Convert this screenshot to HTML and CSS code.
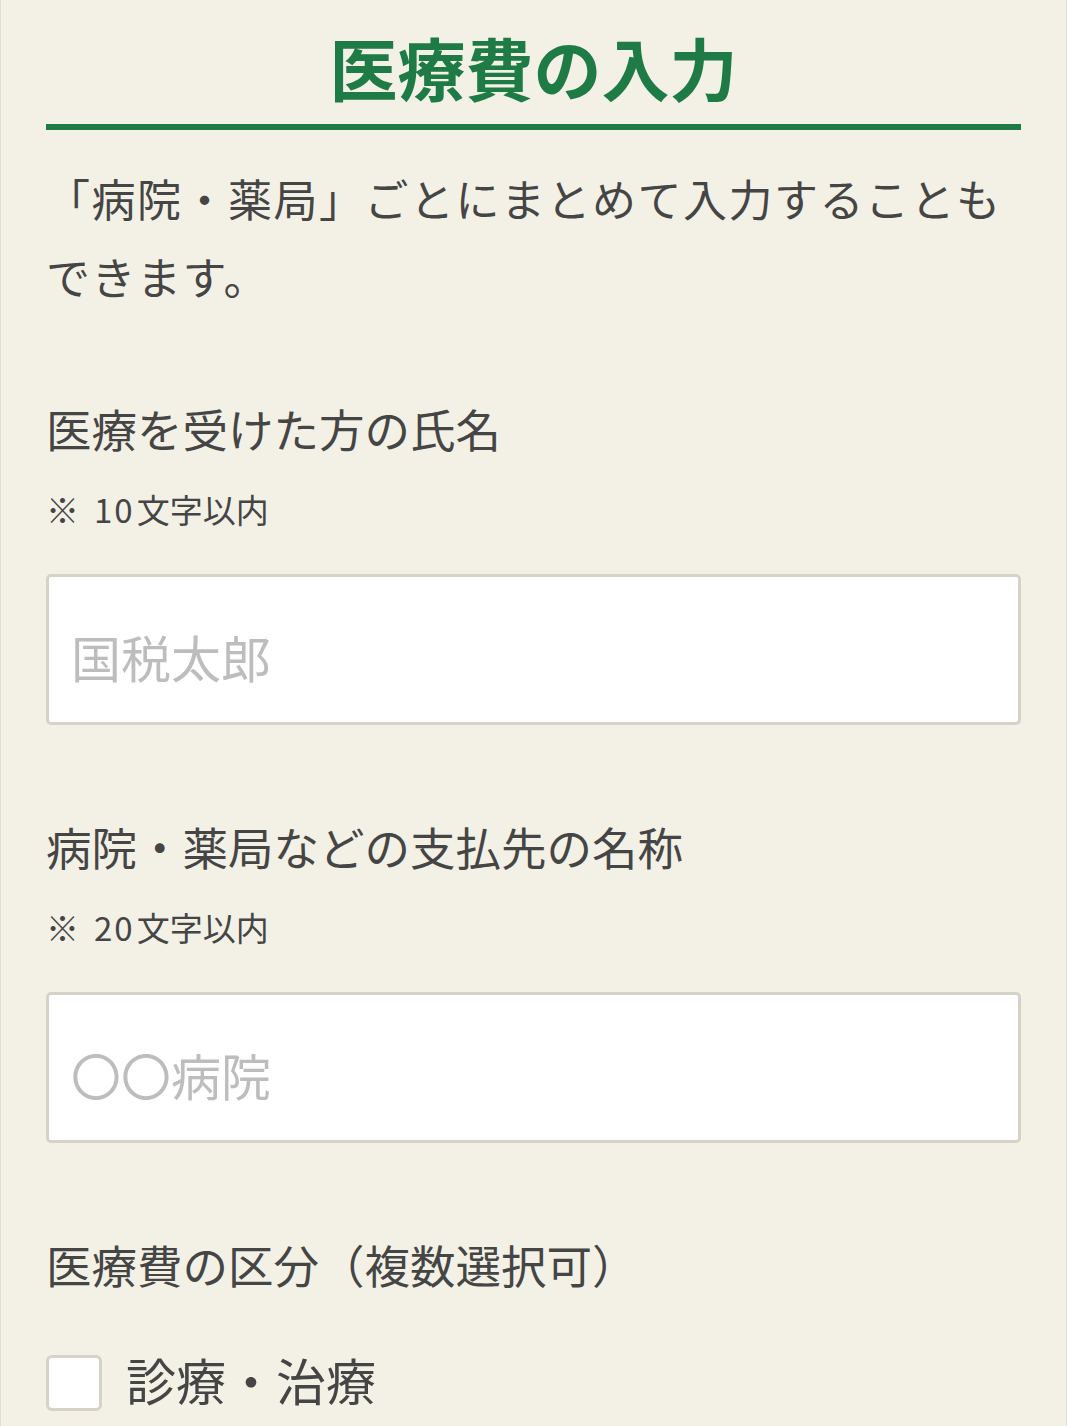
FILE: index.html
```html
<!DOCTYPE html>
<html lang="ja">
<head>
<meta charset="utf-8">
<title>医療費の入力</title>
<link rel="stylesheet" href="styles.css">
</head>
<body>
<main class="page">
  <h1 class="title">医療費の入力</h1>
  <p class="lead">「病院・薬局」ごとにまとめて入力することもできます。</p>

  <div class="field">
    <label class="label" for="name">医療を受けた方の氏名</label>
    <p class="note"><span class="mark">※</span><span class="num">10</span>文字以内</p>
    <input class="text-input" id="name" type="text" placeholder="国税太郎">
  </div>

  <div class="field">
    <label class="label" for="payee">病院・薬局などの支払先の名称</label>
    <p class="note"><span class="mark">※</span><span class="num">20</span>文字以内</p>
    <input class="text-input" id="payee" type="text" placeholder="〇〇病院">
  </div>

  <div class="field field-check">
    <p class="label">医療費の区分（複数選択可）</p>
    <label class="check-row">
      <input class="checkbox" type="checkbox">
      <span class="check-text">診療・治療</span>
    </label>
  </div>
</main>
</body>
</html>
```

FILE: styles.css
```css
html, body {
  margin: 0;
  padding: 0;
}

body {
  background: #f3f1e6;
  color: #454545;
  font-family: "Noto Sans CJK JP", "Noto Sans", sans-serif;
  min-height: 1426px;
  box-shadow: inset 1px 0 0 #e2dfd4, inset -1px 0 0 #e2dfd4;
  text-spacing-trim: space-all;
}

.page {
  padding: 0 46px;
  display: flex;
  flex-direction: column;
}

.title {
  margin: 0;
  padding-top: 27px;
  padding-bottom: 18px;
  font-size: 68px;
  line-height: 79px;
  font-weight: 700;
  color: #1e7b45;
  text-align: center;
  border-bottom: 6px solid #1e7b45;
}

.lead {
  margin: 29px 0 0;
  font-size: 44px;
  line-height: 78px;
  letter-spacing: 1.5px;
}

.field {
  display: flex;
  flex-direction: column;
  margin-top: 83px;
}

.field + .field {
  margin-top: 91px;
}

.label {
  margin: 0;
  font-size: 45.5px;
  line-height: 60px;
}

.note {
  margin: 26px 0 0;
  font-size: 33px;
  line-height: 50px;
}

.mark {
  margin-right: 15px;
}

.num {
  letter-spacing: 2px;
  margin-right: 2px;
}

.text-input {
  margin-top: 40px;
  box-sizing: border-box;
  width: 100%;
  height: 151px;
  border: 3px solid #d7d2c8;
  border-radius: 5px;
  background: #fff;
  padding: 12px 20px 0 22px;
  font-family: "Noto Sans CJK JP", "Noto Sans", sans-serif;
  font-size: 50px;
  color: #454545;
  outline: none;
}

.text-input::placeholder {
  color: #bdbdbd;
}

.check-row {
  margin-top: 55px;
  display: flex;
  align-items: center;
  gap: 24px;
}

.checkbox {
  appearance: none;
  -webkit-appearance: none;
  margin: 0;
  box-sizing: border-box;
  width: 56px;
  height: 56px;
  border: 3px solid #d7d2c8;
  border-radius: 6px;
  background: #fff;
  flex: none;
}

.check-text {
  font-size: 50px;
  line-height: 60px;
  padding-bottom: 8px;
}
```
